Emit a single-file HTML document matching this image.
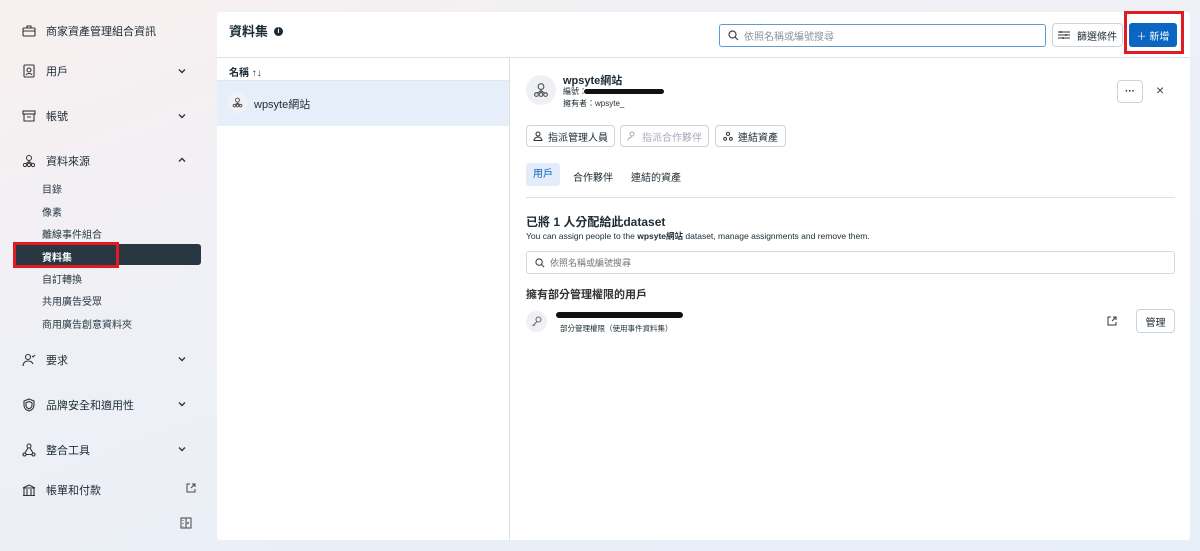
<!DOCTYPE html>
<html><head><meta charset="utf-8"><style>
*{box-sizing:border-box;margin:0;padding:0}
body{width:1200px;height:551px;overflow:hidden;font-family:"Liberation Sans","Noto Sans CJK TC",sans-serif;color:#1c2b33;background:linear-gradient(160deg,#f8f0f0 0%,#eef0f6 40%,#e6eef8 100%);position:relative;font-size:11px}
.a{position:absolute}
.nav{left:22px;font-size:11px;color:#1c2b33;display:flex;align-items:center}
.nav svg{width:14px;height:14px;margin-right:10px}
.chev{position:absolute;left:178px;width:8px;height:8px}
.sub{left:42px;font-size:10px;color:#2a3a44}
.panel{left:217px;top:12px;width:973px;height:528px;background:#fff;border-radius:3px}
.btn{border:1px solid #cbd2d9;border-radius:4px;background:#fff;display:flex;align-items:center;justify-content:center;font-size:10px}
</style></head><body>
<div class="a nav" style="top:23px"><svg viewBox="0 0 14 14" fill="none" stroke="#333" stroke-width="1.1"><rect x="1" y="4" width="12" height="8" rx="1"/><path d="M5 4V2h4v2M1 7h12"/></svg>商家資產管理組合資訊</div>
<div class="a nav" style="top:63px"><svg viewBox="0 0 14 14" fill="none" stroke="#333" stroke-width="1.1"><rect x="2" y="1" width="10" height="12" rx="1"/><circle cx="7" cy="6" r="2"/><path d="M4 11c1-2 5-2 6 0"/></svg>用戶</div>
<svg class="chev" style="top:67px" viewBox="0 0 8 8"><path d="M1 2.5l3 3 3-3" stroke="#333" stroke-width="1.4" fill="none"/></svg>
<div class="a nav" style="top:108px"><svg viewBox="0 0 14 14" fill="none" stroke="#333" stroke-width="1.1"><rect x="1" y="2" width="12" height="3"/><path d="M2 5v7h10V5M5 8h4"/></svg>帳號</div>
<svg class="chev" style="top:112px" viewBox="0 0 8 8"><path d="M1 2.5l3 3 3-3" stroke="#333" stroke-width="1.4" fill="none"/></svg>
<div class="a nav" style="top:153px"><svg viewBox="0 0 14 14" fill="none" stroke="#333" stroke-width="1"><circle cx="7" cy="4" r="2.5"/><circle cx="3" cy="11" r="1.6"/><circle cx="7" cy="11" r="1.6"/><circle cx="11" cy="11" r="1.6"/><path d="M7 6.5v3M4 9.6l3-2 3 2"/></svg>資料來源</div>
<svg class="chev" style="top:156px" viewBox="0 0 8 8"><path d="M1 5.5l3-3 3 3" stroke="#333" stroke-width="1.4" fill="none"/></svg>
<div class="a sub" style="top:181px">目錄</div>
<div class="a sub" style="top:204px">像素</div>
<div class="a sub" style="top:226px">離線事件組合</div>
<div class="a" style="left:13px;top:244px;width:188px;height:21px;background:#283741;border-radius:3px"></div>
<div class="a" style="left:13px;top:242px;width:106px;height:26px;border:3px solid #e01b24"></div>
<div class="a sub" style="top:249px;color:#fff;font-weight:bold">資料集</div>
<div class="a sub" style="top:271px">自訂轉換</div>
<div class="a sub" style="top:293px">共用廣告受眾</div>
<div class="a sub" style="top:316px">商用廣告創意資料夾</div>
<div class="a nav" style="top:352px"><svg viewBox="0 0 14 14" fill="none" stroke="#333" stroke-width="1.1"><circle cx="6" cy="4" r="2.5"/><path d="M1 13c0-3 2-5 5-5s4 1 5 3M10 3l1 1 2-2"/></svg>要求</div>
<svg class="chev" style="top:355px" viewBox="0 0 8 8"><path d="M1 2.5l3 3 3-3" stroke="#333" stroke-width="1.4" fill="none"/></svg>
<div class="a nav" style="top:397px"><svg viewBox="0 0 14 14" fill="none" stroke="#333" stroke-width="1.1"><path d="M7 1l5 2v4c0 3-2 5-5 6-3-1-5-3-5-6V3z"/><path d="M7 3.5l3 1.2v2.5c0 2-1.3 3-3 3.6-1.7-.6-3-1.6-3-3.6V4.7z"/></svg>品牌安全和適用性</div>
<svg class="chev" style="top:400px" viewBox="0 0 8 8"><path d="M1 2.5l3 3 3-3" stroke="#333" stroke-width="1.4" fill="none"/></svg>
<div class="a nav" style="top:442px"><svg viewBox="0 0 14 14" fill="none" stroke="#333" stroke-width="1.1"><circle cx="7" cy="3" r="2"/><circle cx="2.5" cy="11.5" r="1.5"/><circle cx="11.5" cy="11.5" r="1.5"/><path d="M6 5l-3 5M8 5l3 5M4 11.5h6"/></svg>整合工具</div>
<svg class="chev" style="top:445px" viewBox="0 0 8 8"><path d="M1 2.5l3 3 3-3" stroke="#333" stroke-width="1.4" fill="none"/></svg>
<div class="a nav" style="top:482px"><svg viewBox="0 0 14 14" fill="none" stroke="#333" stroke-width="1.1"><path d="M1 5l6-3 6 3zM2 5v7M5 6v6M9 6v6M12 5v7M1 12.5h12"/></svg>帳單和付款</div>
<svg class="a" style="left:186px;top:483px;width:10px;height:10px" viewBox="0 0 10 10" fill="none" stroke="#444" stroke-width="1"><path d="M4 1H1v8h8V6M6 1h3v3M9 1L5 5"/></svg>
<svg class="a" style="left:180px;top:517px;width:12px;height:12px" viewBox="0 0 12 12" fill="none" stroke="#444" stroke-width="1"><rect x="1" y="1" width="10" height="10"/><path d="M6 1v10M3 3v1M3 6v1M3 9v0.5M8.5 5l-1 1 1 1"/></svg>

<div class="a panel"></div>
<div class="a" style="left:229px;top:21px;font-size:13px;font-weight:bold">資料集</div>
<div class="a" style="left:274px;top:27px;width:9px;height:9px;border-radius:50%;background:#1c2b33;color:#fff;font-size:7px;text-align:center;line-height:9px;font-weight:bold">i</div>
<div class="a" style="left:719px;top:24px;width:327px;height:23px;border:1px solid #5b9bd5;border-radius:3px;display:flex;align-items:center;padding-left:8px;color:#8a949c;font-size:10px"><svg width="11" height="11" viewBox="0 0 11 11" fill="none" stroke="#444" stroke-width="1.2" style="margin-right:5px"><circle cx="4.5" cy="4.5" r="3.5"/><path d="M7 7l3 3"/></svg>依照名稱或編號搜尋</div>
<div class="a btn" style="left:1052px;top:23px;width:71px;height:24px"><svg width="12" height="10" viewBox="0 0 12 10" fill="none" stroke="#333" stroke-width="1.1" style="margin-right:7px"><path d="M0 2h12M0 5h12M0 8h12M3 1v2M8 4v2M5 7v2"/></svg>篩選條件</div>
<div class="a" style="left:1129px;top:23px;width:48px;height:24px;background:#0a66c2;border-radius:3px;color:#fff;font-size:10px;display:flex;align-items:center;justify-content:center">＋ 新增</div>
<div class="a" style="left:1124px;top:11px;width:60px;height:43px;border:3px solid #e01b24"></div>
<div class="a" style="left:217px;top:57px;width:973px;height:1px;background:#dde1e5"></div>
<div class="a" style="left:509px;top:58px;width:1px;height:482px;background:#dde1e5"></div>
<div class="a" style="left:229px;top:64px;font-size:10px;font-weight:bold">名稱 <span style="font-weight:normal">↑↓</span></div>
<div class="a" style="left:217px;top:80px;width:292px;height:1px;background:#e4e7ea"></div>
<div class="a" style="left:217px;top:81px;width:292px;height:45px;background:#e6eefa"></div>
<div class="a" style="left:227px;top:92px;width:21px;height:21px;border-radius:50%;background:#f0f2f5"></div>
<svg class="a" style="left:232px;top:97px;width:11px;height:11px" viewBox="0 0 14 14" fill="none" stroke="#555" stroke-width="1.2"><circle cx="7" cy="4" r="2.5"/><circle cx="3" cy="11" r="1.6"/><circle cx="7" cy="11" r="1.6"/><circle cx="11" cy="11" r="1.6"/><path d="M7 6.5v3M4 9.6l3-2 3 2"/></svg>
<div class="a" style="left:254px;top:96px;font-size:11px">wpsyte網站</div>

<div class="a" style="left:526px;top:75px;width:30px;height:30px;border-radius:50%;background:#eef0f3"></div>
<svg class="a" style="left:533px;top:82px;width:16px;height:16px" viewBox="0 0 14 14" fill="none" stroke="#555" stroke-width="1"><circle cx="7" cy="4" r="2.5"/><circle cx="3" cy="11" r="1.6"/><circle cx="7" cy="11" r="1.6"/><circle cx="11" cy="11" r="1.6"/><path d="M7 6.5v3M4 9.6l3-2 3 2"/></svg>
<div class="a" style="left:563px;top:72px;font-size:11px;font-weight:bold">wpsyte網站</div>
<div class="a" style="left:563px;top:86px;font-size:8px">編號：</div>
<div class="a" style="left:584px;top:89px;width:80px;height:5px;border-radius:3px;background:#111"></div>
<div class="a" style="left:563px;top:98px;font-size:8px">擁有者：wpsyte_</div>
<div class="a btn" style="left:1117px;top:80px;width:26px;height:23px;font-weight:bold">···</div>
<div class="a" style="left:1156px;top:82px;font-size:14px;color:#444">×</div>
<div class="a btn" style="left:526px;top:125px;width:89px;height:22px"><svg width="10" height="10" viewBox="0 0 10 10" fill="none" stroke="#333" stroke-width="1.1" style="margin-right:5px"><circle cx="5" cy="3" r="2"/><path d="M1 9.5c0-2 2-3.5 4-3.5s4 1.5 4 3.5z"/></svg>指派管理人員</div>
<div class="a btn" style="left:620px;top:125px;width:89px;height:22px;color:#aab"><svg width="10" height="10" viewBox="0 0 10 10" fill="none" stroke="#aab" stroke-width="1.1" style="margin-right:5px"><circle cx="5" cy="3" r="2"/><path d="M1 9.5c0-2 2-3.5 4-3.5"/></svg>指派合作夥伴</div>
<div class="a btn" style="left:715px;top:125px;width:71px;height:22px"><svg width="10" height="10" viewBox="0 0 14 14" fill="none" stroke="#333" stroke-width="1.4" style="margin-right:5px"><circle cx="7" cy="4" r="2.2"/><circle cx="3" cy="11" r="2"/><circle cx="11" cy="11" r="2"/></svg>連結資產</div>
<div class="a" style="left:526px;top:163px;width:34px;height:23px;background:#e3ecf8;border-radius:3px;color:#0a66c2;font-size:10px;text-align:center;line-height:23px">用戶</div>
<div class="a" style="left:573px;top:169px;font-size:10px">合作夥伴</div>
<div class="a" style="left:631px;top:169px;font-size:10px">連結的資產</div>
<div class="a" style="left:526px;top:197px;width:649px;height:1px;background:#dde1e5"></div>
<div class="a" style="left:526px;top:213px;font-size:12px;font-weight:bold">已將 1 人分配給此dataset</div>
<div class="a" style="left:526px;top:230px;font-size:8.5px">You can assign people to the <b>wpsyte網站</b> dataset, manage assignments and remove them.</div>
<div class="a" style="left:526px;top:251px;width:649px;height:23px;border:1px solid #d4d9de;border-radius:3px;display:flex;align-items:center;padding-left:8px;color:#777;font-size:9px"><svg width="10" height="10" viewBox="0 0 11 11" fill="none" stroke="#444" stroke-width="1.2" style="margin-right:5px"><circle cx="4.5" cy="4.5" r="3.5"/><path d="M7 7l3 3"/></svg>依照名稱或編號搜尋</div>
<div class="a" style="left:526px;top:286px;font-size:11px;font-weight:bold;color:#333">擁有部分管理權限的用戶</div>
<div class="a" style="left:526px;top:311px;width:21px;height:21px;border-radius:50%;background:#eef0f3"></div>
<svg class="a" style="left:531px;top:316px;width:11px;height:11px" viewBox="0 0 11 11" fill="none" stroke="#666" stroke-width="1"><circle cx="7.5" cy="3.5" r="2.5"/><path d="M6 5.5L1.5 10M3 8.5l1 1"/></svg>
<div class="a" style="left:556px;top:312px;width:127px;height:6px;border-radius:3px;background:#111"></div>
<div class="a" style="left:560px;top:323px;font-size:7.5px">部分管理權限（使用事件資料集）</div>
<svg class="a" style="left:1107px;top:316px;width:10px;height:10px" viewBox="0 0 10 10" fill="none" stroke="#333" stroke-width="1"><path d="M4 1H1v8h8V6M6 1h3v3M9 1L5 5"/></svg>
<div class="a btn" style="left:1136px;top:309px;width:39px;height:24px">管理</div>
</body></html>
